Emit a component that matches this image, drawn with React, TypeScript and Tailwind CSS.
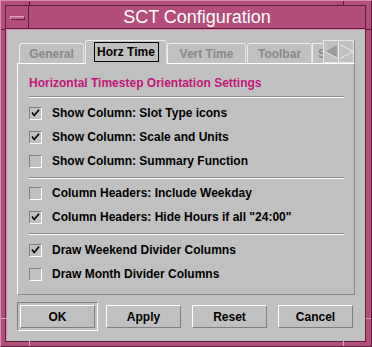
const rows1 = [
  { label: "Show Column: Slot Type icons", checked: true },
  { label: "Show Column: Scale and Units", checked: true },
  { label: "Show Column: Summary Function", checked: false },
];
const rows2 = [
  { label: "Column Headers: Include Weekday", checked: false },
  { label: 'Column Headers: Hide Hours if all "24:00"', checked: true },
];
const rows3 = [
  { label: "Draw Weekend Divider Columns", checked: true },
  { label: "Draw Month Divider Columns", checked: false },
];

function CheckRow({ label, checked }: { label: string; checked: boolean }) {
  return (
    <div className="flex h-[24px] items-center">
      <div className="flex h-[13px] w-[13px] items-center justify-center border border-t-[#808080] border-l-[#808080] border-r-white border-b-white">
        {checked && (
          <svg width="9" height="8" viewBox="0 0 9 8">
            <polyline points="1,3.5 3.2,6.5 8,0.8" fill="none" stroke="#000" strokeWidth="1.6" />
          </svg>
        )}
      </div>
      <span className="ml-[10px] text-[12px] font-bold leading-[16px] text-black">{label}</span>
    </div>
  );
}

function Separator({ className }: { className: string }) {
  return <div className={`h-[2px] border-t border-b border-t-[#888888] border-b-white ${className}`} />;
}

function Tab({ label, width }: { label: string; width: string }) {
  return (
    <div
      className={`flex h-[20px] items-center justify-center rounded-t-[3px] border-l border-t border-r border-l-[#ececec] border-t-[#ececec] border-r-[#e0e0e0] ${width}`}
    >
      <span className="text-[12px] font-bold leading-[14px] text-[#8a8a8a]">{label}</span>
    </div>
  );
}

function Button({ label }: { label: string }) {
  return (
    <div className="flex h-[23px] w-[75px] items-center justify-center border border-t-white border-l-white border-r-[#808080] border-b-[#808080]">
      <span className="text-[12px] font-bold leading-[14px] text-black">{label}</span>
    </div>
  );
}

export default function App() {
  return (
    <div className="relative h-[347px] w-[372px] border border-t-[#d98bb0] border-l-[#d98bb0] border-r-[#5e1f3c] border-b-[#5e1f3c] bg-[#b34d79] py-[4px] pl-[4px] pr-[5px] font-['Liberation_Sans',Arial,sans-serif]">
      {/* frame resize ticks */}
      <div className="absolute left-[28px] top-0 h-[5px] w-px bg-[#5e1f3c]" />
      <div className="absolute left-[342px] top-0 h-[5px] w-px bg-[#5e1f3c]" />
      <div className="absolute bottom-0 left-[28px] h-[5px] w-px bg-[#e2a0be]" />
      <div className="absolute bottom-0 left-[342px] h-[5px] w-px bg-[#e2a0be]" />
      <div className="absolute left-0 top-[28px] h-px w-[5px] bg-[#5e1f3c]" />
      <div className="absolute left-0 top-[317px] h-px w-[5px] bg-[#e2a0be]" />
      <div className="absolute right-0 top-[28px] h-px w-[5px] bg-[#5e1f3c]" />
      <div className="absolute right-0 top-[317px] h-px w-[5px] bg-[#e2a0be]" />

      <div className="flex h-full flex-col border border-[#5e1f3c]">
        {/* title bar */}
        <div className="flex h-[23px] border-b border-[#5e1f3c]">
          <div className="flex w-[23px] items-center justify-center border-r border-[#5e1f3c]">
            <div className="mt-[1px] h-[4px] w-[15px] border border-t-[#e2a0be] border-l-[#e2a0be] border-r-[#5e1f3c] border-b-[#5e1f3c] bg-[#c4668f]" />
          </div>
          <div className="flex flex-1 items-center justify-center text-[18px] leading-[20px] text-white">
            SCT Configuration
          </div>
        </div>

        {/* client area */}
        <div className="flex flex-1 flex-col border-l border-t border-[#d98bb0] bg-[#c0c0c0] px-[10px] pt-[10px]">
          {/* tabs */}
          <div className="relative z-10 flex h-[23px] items-end pl-[2px]">
            <Tab label="General" width="w-[65px]" />
            <div className="w-px" />
            <div className="mb-[-1px] flex h-[24px] w-[82px] items-start justify-center rounded-t-[3px] border-l border-t border-r border-l-[#ececec] border-t-[#ececec] border-r-[#e0e0e0] bg-[#c0c0c0] pt-[1px]">
              <div className="flex h-[20px] w-[65px] items-center justify-center border border-black">
                <span className="text-[12px] font-bold leading-[14px] text-black">Horz Time</span>
              </div>
            </div>
            <Tab label="Vert Time" width="w-[79px]" />
            <div className="w-px" />
            <Tab label="Toolbar" width="w-[65px]" />
            <div className="flex h-[20px] w-[11px] items-center overflow-hidden border-l border-t border-[#ececec] pl-[5px]">
              <span className="text-[12px] font-bold leading-[14px] text-[#8a8a8a]">S</span>
            </div>
            <svg width="32" height="23" viewBox="0 0 32 23" className="block">
              <rect x="0.5" y="0.5" width="15" height="22" fill="#c0c0c0" stroke="#e6e6e6" />
              <rect x="15.5" y="0.5" width="15" height="22" fill="#c0c0c0" stroke="#e6e6e6" />
              <line x1="31.5" y1="0" x2="31.5" y2="23" stroke="#888888" />
              <polygon points="2,11.5 14,5 14,18" fill="#9c9c9c" />
              <line x1="2" y1="11.5" x2="14" y2="18" stroke="#e8e8e8" />
              <polyline points="17,4.5 30,11.5 17,18.5" fill="none" stroke="#ececec" />
            </svg>
          </div>

          {/* panel */}
          <div className="flex h-[232px] flex-col border border-t-white border-l-white border-r-[#888888] border-b-[#888888] pl-[11px] pr-[10px]">
            <div className="mt-[11px] text-[12px] font-bold leading-[16px] text-[#c0187c]">
              Horizontal Timestep Orientation Settings
            </div>
            <Separator className="mt-[5px]" />
            <div className="mt-[3px] flex flex-col">
              {rows1.map((r) => (
                <CheckRow key={r.label} {...r} />
              ))}
            </div>
            <Separator className="mt-[4px]" />
            <div className="mt-[2px] flex flex-col">
              {rows2.map((r) => (
                <CheckRow key={r.label} {...r} />
              ))}
            </div>
            <Separator className="mt-[4px]" />
            <div className="mt-[3px] flex flex-col">
              {rows3.map((r) => (
                <CheckRow key={r.label} {...r} />
              ))}
            </div>
          </div>

          {/* buttons */}
          <div className="mt-[7px] flex items-start">
            <div className="border border-t-[#808080] border-l-[#808080] border-r-white border-b-white p-[2px]">
              <Button label="OK" />
            </div>
            <div className="ml-[8px] mt-[3px] flex gap-[11px]">
              <Button label="Apply" />
              <Button label="Reset" />
              <Button label="Cancel" />
            </div>
          </div>
        </div>
      </div>
    </div>
  );
}
